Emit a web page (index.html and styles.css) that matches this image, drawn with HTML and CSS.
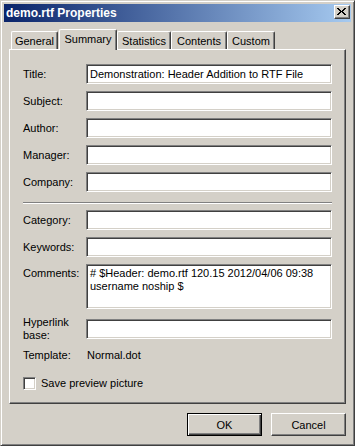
FILE: index.html
```html
<!DOCTYPE html>
<html>
<head>
<meta charset="utf-8">
<link rel="stylesheet" href="styles.css">
</head>
<body>
<div class="window">
  <div class="titlebar">
    <span class="title">demo.rtf Properties</span>
    <div class="close">
      <svg width="9" height="7" viewBox="0 0 9 7" shape-rendering="crispEdges"><path d="M0 0h2v1h-2zM7 0h2v1h-2zM1 1h2v1h-2zM6 1h2v1h-2zM2 2h2v1h-2zM5 2h2v1h-2zM3 3h3v1h-3zM2 4h2v1h-2zM5 4h2v1h-2zM1 5h2v1h-2zM6 5h2v1h-2zM0 6h2v1h-2zM7 6h2v1h-2z" fill="#000"/></svg>
    </div>
  </div>
  <div class="body">
    <div class="tabs">
      <div class="tab t-general">General</div>
      <div class="tab t-summary active">Summary</div>
      <div class="tab t-stats">Statistics</div>
      <div class="tab t-contents">Contents</div>
      <div class="tab t-custom">Custom</div>
    </div>
    <div class="panel">
      <div class="form">
        <label>Title:</label><input class="field" type="text" value="Demonstration: Header Addition to RTF File">
        <label>Subject:</label><input class="field" type="text" value="">
        <label>Author:</label><input class="field" type="text" value="">
        <label>Manager:</label><input class="field" type="text" value="">
        <label>Company:</label><input class="field" type="text" value="">
      </div>
      <div class="sep"></div>
      <div class="form">
        <label>Category:</label><input class="field" type="text" value="">
        <label>Keywords:</label><input class="field" type="text" value="">
        <label class="top">Comments:</label><textarea class="field multi"># $Header: demo.rtf 120.15 2012/04/06 09:38
username noship $</textarea>
        <label class="two">Hyperlink<br>base:</label><input class="field" type="text" value="">
        <label>Template:</label><span class="value">Normal.dot</span>
      </div>
      <div class="check"><span class="box"></span><span>Save preview picture</span></div>
    </div>
    <div class="buttons">
      <button class="btn default">OK</button>
      <button class="btn">Cancel</button>
    </div>
  </div>
</div>
</body>
</html>
```
FILE: styles.css
```css
* { box-sizing: border-box; }
html, body { margin: 0; padding: 0; }
body {
  width: 355px;
  height: 446px;
  background: #d4d0c8;
  font-family: "Liberation Sans", Arial, sans-serif;
  font-size: 11px;
  color: #000;
}
.window {
  width: 355px;
  height: 446px;
  background: #d4d0c8;
  border: 1px solid;
  border-color: #d4d0c8 #404040 #404040 #d4d0c8;
  box-shadow: inset 1px 1px #fff, inset -1px -1px #808080;
  padding: 3px;
  display: flex;
  flex-direction: column;
}
.titlebar {
  height: 18px;
  background: linear-gradient(to right, #0a246a, #a6caf0);
  display: flex;
  align-items: flex-start;
  justify-content: space-between;
  padding: 0 1px 0 2px;
}
.title {
  color: #fff;
  font-weight: bold;
  font-size: 12px;
  line-height: 14px;
  margin-top: 2px;
}
.close {
  width: 16px;
  height: 14px;
  margin-top: 1px;
  background: #d4d0c8;
  border: 1px solid;
  border-color: #fff #404040 #404040 #fff;
  box-shadow: inset -1px -1px #808080;
  display: flex;
  align-items: center;
  justify-content: center;
  padding: 0 1px 1px 0;
}
.close svg { display: block; }
.body {
  padding: 7px 5px 6px;
  display: flex;
  flex-direction: column;
}
.tabs {
  height: 20px;
  display: flex;
  align-items: flex-end;
  position: relative;
  z-index: 1;
}
.tab {
  height: 18px;
  background: #d4d0c8;
  border-top: 1px solid #fff;
  border-left: 1px solid #fff;
  border-right: 1px solid #404040;
  box-shadow: inset -1px 0 #808080;
  border-radius: 2px 2px 0 0;
  text-align: center;
  line-height: 13px;
  padding-top: 3px;
  white-space: nowrap;
}
.tab.active {
  height: 21px;
  margin-bottom: -1px;
}
.t-general { width: 47px; margin-left: 2px; margin-right: 1px; }
.t-summary { width: 58px; }
.t-stats { width: 54px; }
.t-contents { width: 56px; }
.t-custom { width: 48px; }
.panel {
  height: 355px;
  border: 1px solid;
  border-color: #fff #404040 #404040 #fff;
  box-shadow: inset -1px -1px #808080;
  padding: 14px 13px 0;
}
.form {
  display: grid;
  grid-template-columns: 63px 246px;
  row-gap: 7px;
  align-items: center;
}
.form label { line-height: 13px; }
.form label.top { align-self: start; padding-top: 3px; }
.field {
  display: block;
  width: 246px;
  height: 20px;
  margin: 0;
  border: 1px solid;
  border-color: #808080 #fff #fff #808080;
  box-shadow: inset 1px 1px #404040, inset -1px -1px #d4d0c8;
  background: #fff;
  padding: 0 3px;
  font: inherit;
  color: #000;
  outline: none;
  -webkit-appearance: none;
  appearance: none;
}
.field.multi {
  height: 45px;
  resize: none;
  overflow: hidden;
  line-height: 13px;
  padding: 2px 3px;
  white-space: pre;
}
.value { line-height: 13px; padding-left: 1px; }
.sep {
  width: 309px;
  height: 2px;
  border-top: 1px solid #808080;
  border-bottom: 1px solid #fff;
  margin: 10px 0 6px;
}
.check {
  display: flex;
  align-items: center;
  gap: 5px;
  margin-top: 15px;
  line-height: 13px;
}
.box {
  width: 13px;
  height: 13px;
  background: #fff;
  border: 1px solid;
  border-color: #808080 #fff #fff #808080;
  box-shadow: inset 1px 1px #404040, inset -1px -1px #d4d0c8;
}
.buttons {
  display: flex;
  justify-content: flex-end;
  gap: 9px;
  margin-top: 9px;
}
.btn {
  width: 75px;
  height: 23px;
  margin: 0;
  padding: 0;
  background: #d4d0c8;
  border: 1px solid;
  border-color: #fff #404040 #404040 #fff;
  box-shadow: inset -1px -1px #808080;
  font: inherit;
  color: #000;
}
.btn.default {
  border-color: #000;
  box-shadow: inset 1px 1px #fff, inset -1px -1px #404040, inset -2px -2px #808080;
}
```
